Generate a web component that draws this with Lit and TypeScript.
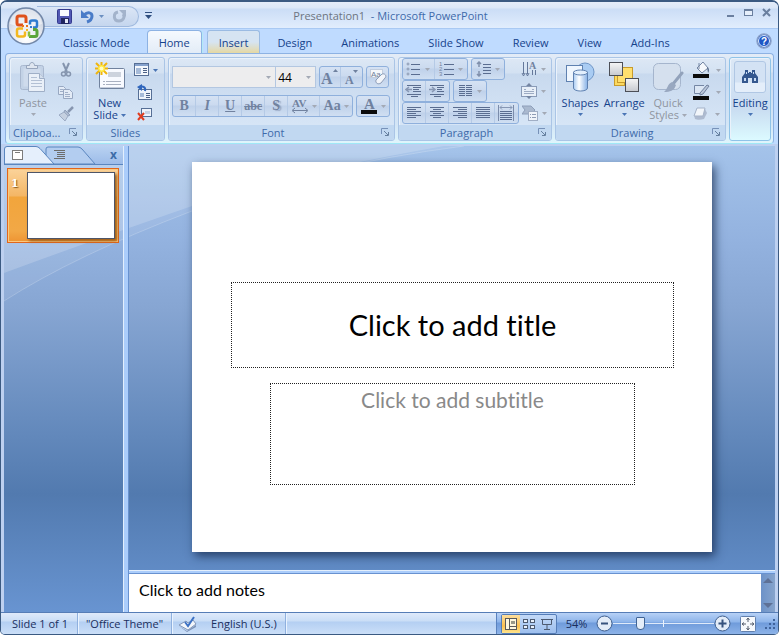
import { LitElement, html, svg, css, TemplateResult } from "lit";
import { customElement } from "lit/decorators.js";
import { classMap } from "lit/directives/class-map.js";

type Art = TemplateResult;

const icon = (w: number, h: number, body: Art) =>
  html`<svg width=${w} height=${h} viewBox="0 0 ${w} ${h}" aria-hidden="true">${body}</svg>`;

const caret = (color = "#a3a9b5") =>
  html`<svg class="caret" width="5" height="3" viewBox="0 0 5 3" aria-hidden="true"><path d="M0 0h5L2.5 3z" fill=${color} /></svg>`;

const lines = (rows: number[][], color = "#5a6d90") =>
  svg`${rows.map(([x, y, w]) => svg`<rect x=${x} y=${y} width=${w} height="1" fill=${color} />`)}`;

const art = {
  paste: icon(28, 32, svg`
    <rect x="1.5" y="4.500" width="23" height="24" rx="2" fill="#c3d2e6" stroke="#a9b8cf"/>
    <rect x="4.500" y="7.500" width="17" height="18" fill="#cfdbec"/>
    <path d="M7.500 7.500v-3h3c0-4 5-4 5 0h3v3z" fill="#dfe6f0" stroke="#97a5bc"/>
    <path d="M9.500 12.500h11l5 5v13h-16z" fill="#eaf0f8" stroke="#9fafc7"/>
    <path d="M20.500 12.500v5h5" fill="#d3deec" stroke="#9fafc7"/>
    ${lines([[12, 16, 6], [12, 19, 11], [12, 22, 11], [12, 25, 11]], "#b3c0d4")}`),
  cut: icon(16, 16, svg`
    <path d="M4 1l4 9M10 1L6 10" stroke="#8595ae" stroke-width="2" fill="none"/>
    <circle cx="4.500" cy="12" r="2" fill="none" stroke="#8595ae" stroke-width="1.500"/>
    <circle cx="9.500" cy="12" r="2" fill="none" stroke="#8595ae" stroke-width="1.500"/>`),
  copy: icon(18, 16, svg`
    <path d="M.5 2.500h5l2 2v6h-7z" fill="#e3ebf6" stroke="#98a8c2"/>
    <path d="M5.500 5.500h6l3 3v6h-9z" fill="#e3ebf6" stroke="#98a8c2"/>
    ${lines([[2, 5, 3], [2, 7, 3], [7, 8, 3], [7, 10, 5], [7, 12, 5]], "#a0afc8")}`),
  painter: icon(18, 16, svg`
    <path d="M15 1l-5 5" stroke="#8796b0" stroke-width="2.500"/>
    <path d="M7 4l5 5-2 1-4-4z" fill="#aebbd0" stroke="#8f9fba"/>
    <path d="M6 6l4 4-3 5L1 9z" fill="#c5d0e0" stroke="#9cabc3"/>`),
  newSlide: icon(32, 32, svg`
    <rect x="5.500" y="7.500" width="25" height="20" rx="1" fill="#f8faff" stroke="#70829e"/>
    <rect x="6" y="26" width="24" height="1" fill="#c4cddc"/>
    <rect x="14" y="11" width="13" height="5" fill="#cdd3dd"/>
    ${lines([[9, 20, 2], [12, 20, 15], [9, 23, 2], [12, 23, 15]], "#a8b0c0")}
    <path d="M7.500 7.500L2 2M7.500 7.500L13 2M7.500 7.500L2 13M7.500 7.500L13 13M7.500 1v13M1 7.500h13" stroke="#efb50f" stroke-width="2"/>
    <circle cx="7.500" cy="7.500" r="3.500" fill="#ffe83e"/><circle cx="7.500" cy="7.500" r="2" fill="#fffcc0"/>`),
  layout: icon(15, 14, svg`
    <rect x=".5" y=".5" width="14" height="12" fill="#f4f8fd" stroke="#566f96"/>
    <rect x="1" y="1" width="13" height="2" fill="#86a2cd"/>
    <rect x="2" y="5" width="5" height="6" fill="#a6bbd9"/>
    ${lines([[9, 5, 4], [9, 7, 4], [9, 9, 4]], "#4c6187")}`),
  reset: icon(16, 17, svg`
    <rect x="1.500" y="5.500" width="13" height="10" fill="#eef4fc" stroke="#566f96"/>
    <rect x="3" y="9" width="4" height="4" fill="#a6bbd9"/>
    ${lines([[9, 9, 4], [9, 11, 4], [9, 13, 4]], "#4c6187")}
    <path d="M8 7c1-4-2-5-5-4" fill="none" stroke="#2f66bd" stroke-width="2"/><path d="M0 3l5-3v7z" fill="#2f66bd"/>`),
  remove: icon(16, 14, svg`
    <rect x="4.500" y="1.500" width="10" height="8" fill="#eef4fc" stroke="#566f96"/>
    <rect x="8" y="4" width="5" height="3" fill="#c5d3e6"/>
    <path d="M1 6l6 7M7 6l-6 7" stroke="#e03c20" stroke-width="2"/>`),
  grow: icon(20, 18, svg`
    <text x="1" y="16" font-family="Liberation Serif" font-weight="bold" font-size="16" fill="#6f819f">A</text>
    <path d="M13 4l2.500-3L18 4z" fill="#6f819f"/>`),
  shrink: icon(18, 18, svg`
    <text x="2" y="16" font-family="Liberation Serif" font-weight="bold" font-size="12" fill="#6f819f">A</text>
    <path d="M10 2l2.500 3L15 2z" fill="#6f819f"/>`),
  clear: icon(18, 18, svg`
    <rect x="1.500" y="1.500" width="12" height="8" fill="#f4f7fb" stroke="#c2cddd"/>
    <text x="2" y="9" font-family="Liberation Sans" font-size="8" fill="#6f7f9a">Aa</text>
    <path d="M7 12l6-6c3-1 5 2 3 4l-4 5c-3 2-6 0-5-3z" fill="#f2f5fa" stroke="#8d9cb6"/>`),
  spacing: icon(18, 16, svg`
    <text x="1" y="9" font-family="Liberation Serif" font-weight="bold" font-size="11" fill="#71829f">AV</text>
    <path d="M2 12.500h14M4 10l-3 2.500L4 15M14 10l3 2.500-3 2.500" stroke="#71829f" fill="none"/>`),
  fontColor: icon(17, 18, svg`
    <text x="3" y="12" font-family="Liberation Serif" font-weight="bold" font-size="15" fill="#6f819f">A</text>
    <rect x="0" y="13" width="16" height="4" fill="#0c0c0c"/>`),
  bullets: icon(16, 14, svg`
    <g fill="none" stroke="#8a98b1"><circle cx="2" cy="2" r="1"/><circle cx="2" cy="7" r="1"/><circle cx="2" cy="12" r="1"/></g>
    ${lines([[5, 2, 9], [5, 7, 9], [5, 12, 9]])}`),
  numbers: icon(16, 14, svg`
    <g font-family="Liberation Sans" font-size="6" fill="#75849f"><text x="0" y="4">1</text><text x="0" y="9">2</text><text x="0" y="14">3</text></g>
    ${lines([[5, 2, 10], [5, 7, 10], [5, 12, 10]])}`),
  lineSpacing: icon(17, 16, svg`
    <path d="M4 6V1M2 3l2-2 2 2M4 10v5M2 13l2 2 2-2" fill="none" stroke="#8090ac" stroke-width="1.500"/>
    ${lines([[8, 3, 8], [8, 6, 8], [8, 9, 8], [8, 12, 8]])}`),
  outdent: icon(18, 16, svg`
    ${lines([[2, 2, 14], [8, 4, 8], [8, 6, 6], [8, 8, 8], [2, 11, 14], [6, 13, 7]])}
    <path d="M7 6.500H1M4 4L1 6.500 4 9" fill="none" stroke="#8797b4" stroke-width="1.500"/>`),
  indent: icon(18, 16, svg`
    ${lines([[2, 2, 14], [9, 4, 7], [9, 6, 5], [9, 8, 7], [2, 11, 14], [6, 13, 7]])}
    <path d="M1 6.500h6M4 4l3 2.500L4 9" fill="none" stroke="#8797b4" stroke-width="1.500"/>`),
  columns: icon(16, 14, svg`${lines([1, 3, 5, 7, 9, 11].flatMap((y) => [[1, y, 6], [8, y, 6]]))}`),
  left: icon(16, 14, svg`${lines([[1, 1, 14], [1, 3, 9], [1, 5, 14], [1, 7, 9], [1, 9, 14], [1, 11, 9]])}`),
  center: icon(16, 14, svg`${lines([[1, 1, 14], [4, 3, 8], [1, 5, 14], [4, 7, 8], [1, 9, 14], [4, 11, 8]])}`),
  right: icon(16, 14, svg`${lines([[1, 1, 14], [6, 3, 9], [1, 5, 14], [6, 7, 9], [1, 9, 14], [6, 11, 9]])}`),
  justify: icon(16, 14, svg`${lines([1, 3, 5, 7, 9, 11].map((y) => [1, y, 14]))}`),
  distribute: icon(18, 16, svg`
    <path d="M1.500 0v16M16.500 0v16" stroke="#7b8cab"/><path d="M3 2.500h12M5 .5l-2 2 2 2M13 .5l2 2-2 2" fill="none" stroke="#8797b4"/>
    ${lines([6, 8, 10, 12, 14].map((y) => [3, y, 12]))}`),
  direction: icon(16, 16, svg`
    <path d="M2.500 1v12M6.500 1v12M11.500 9v5M1 12l1.500 3L4 12M5 12l1.500 3L8 12M14.500 9v5" fill="none" stroke="#65789a"/>
    <text x="8" y="8" font-family="Liberation Serif" font-weight="bold" font-size="10" fill="#71829f">A</text>`),
  alignText: icon(16, 16, svg`
    <rect x=".5" y="3.500" width="15" height="10" fill="#e8eff8" stroke="#8a9bb7"/>
    ${lines([[3, 6, 2], [11, 6, 2], [3, 8, 10], [3, 10, 10]], "#9dabc3")}
    <path d="M8 0l3 3H5zM8 16l3-3H5z" fill="#7485a2"/>`),
  smartArt: icon(16, 16, svg`
    <path d="M0 1h9l4 4-4 4H0l3-4z" fill="#aab9cf" stroke="#8e9fba"/>
    <rect x="6.500" y="6.500" width="9" height="9" fill="#f0f4fa" stroke="#a0aec5"/>
    ${lines([[8, 9, 1], [10, 9, 4], [8, 12, 1], [10, 12, 4]], "#8e9cb5")}`),
  shapes: icon(32, 32, svg`
    <defs><linearGradient id="cyl"><stop offset="0" stop-color="#a9cbf2"/><stop offset=".4" stop-color="#fff"/><stop offset="1" stop-color="#86b1e6"/></linearGradient></defs>
    <circle cx="21" cy="11" r="9" fill="#a9ccf3" stroke="#6f96c7"/>
    <rect x="2.500" y="4.500" width="16" height="16" fill="#eff6fe" stroke="#5f81b0"/>
    <path d="M9.500 11v16c0 4 14 4 14 0V11z" fill="url(#cyl)" stroke="#5f81b0"/>
    <ellipse cx="16.500" cy="11.500" rx="7" ry="2.500" fill="#e2effd" stroke="#5f81b0"/>`),
  arrange: icon(32, 32, svg`
    <defs><linearGradient id="box" x1="0" y1="0" x2="0" y2="1"><stop offset="0" stop-color="#f6f6f6"/><stop offset="1" stop-color="#c6c9cf"/></linearGradient></defs>
    <rect x="6.500" y="14.500" width="10" height="10" fill="#fbd960" stroke="#c89b2c"/>
    <rect x="9.500" y="6.500" width="15" height="15" fill="#ffdf6e" stroke="#c89b2c"/>
    <rect x="1.500" y="1.500" width="13" height="13" fill="url(#box)" stroke="#4c4f57"/>
    <rect x="17.500" y="17.500" width="13" height="13" fill="url(#box)" stroke="#4c4f57"/>`),
  styles: icon(32, 32, svg`
    <rect x="1.500" y="2.500" width="27" height="26" rx="5" fill="#d5e0ee" stroke="#a5b5cd"/>
    <path d="M30 12l-9 11" stroke="#92a2bb" stroke-width="3" stroke-linecap="round"/>
    <path d="M20 21l4 3c-2 6-6 7-12 7 4-3 3-8 8-10z" fill="#99a8c0"/>`),
  fill: icon(17, 18, svg`
    <path d="M4 7l6-6 5 6-6 5z" fill="#f5f8fc" stroke="#7486a4"/><path d="M6 2v6" stroke="#7486a4"/><path d="M14 6c3 1 2 5 1 6z" fill="#5e718f"/>
    <rect x="0" y="13" width="16" height="4" fill="#0c0c0c"/>`),
  outline: icon(17, 18, svg`
    <path d="M11 2.500H1.500v8H10" fill="#dbe6f4" stroke="#7486a4"/><path d="M7 10l7-8 2 1-6 8-3 1z" fill="#b9c6da" stroke="#6f809e"/>
    <rect x="0" y="13" width="16" height="4" fill="#0c0c0c"/>`),
  effects: icon(16, 14, svg`
    <path d="M1 8l3-6c4-1 7-1 8 0l2 4-3 6c-3 1-7 1-9 0z" fill="#aebbd0"/><path d="M4 1h8l-2 8H1z" fill="#f1f5fa" stroke="#a5b3c9"/>`),
  find: icon(18, 16, svg`
    <path d="M4 1h3v3h1V3h2v1h1V1h3v3l3 4v6h-6V9H7v5H1V8l3-4z" fill="#35588f"/>
    <path d="M3 9h2v3H3zM13 9h2v3h-2zM5 3h1v2H5zM12 3h1v2h-1z" fill="#c9dcf4"/>`),
  launch: icon(9, 9, svg`
    <path d="M.5 6V.5H7" fill="none" stroke="#7791b8"/><path d="M3 3l4 4M7.500 4v3.500H4" fill="none" stroke="#66809f"/>`),
  save: icon(15, 15, svg`
    <rect x=".5" y=".5" width="14" height="14" rx="1" fill="#5258b4" stroke="#343a8e"/>
    <rect x="3" y="1" width="9" height="6" fill="#f7f9ff"/><rect x="4" y="9" width="8" height="6" fill="#1f2560"/><rect x="8" y="10" width="3" height="4" fill="#e4e8f8"/>`),
  undo: icon(15, 15, svg`
    <path d="M4 6c4-4 8-2 8 1 0 3-2 5-5 6" fill="none" stroke="#4a7cc8" stroke-width="3"/><path d="M1 1v8h8z" fill="#4a7cc8"/>`),
  redo: icon(15, 15, svg`
    <path d="M6 3C1 4 1 12 7 12c5 0 6-5 4-7" fill="none" stroke="#a3b3cb" stroke-width="3"/><path d="M7 1h7v7z" fill="#a3b3cb"/>`),
  orb: icon(40, 40, svg`
    <defs><radialGradient id="orb" cx=".5" cy=".85" r=".8"><stop offset="0" stop-color="#fff"/><stop offset=".5" stop-color="#e6e9f0"/><stop offset="1" stop-color="#bcc6d8"/></radialGradient></defs>
    <circle cx="20" cy="20" r="18" fill="url(#orb)" stroke="#7287a8" stroke-width="1.500"/>
    <path d="M4 18a16 15 0 0132 0q-16 6-32 0z" fill="#fff" opacity=".5"/>
    <g fill="none" stroke-width="2.500">
      <path d="M17 19h-4q-2 0-2-2v-5q0-2 2-2h5q2 0 2 2v5" stroke="#df521c" stroke-width="3"/>
      <path d="M24 18.500v-2q0-2 2-2h3q2 0 2 2v3q0 2-2 2h-2" stroke="#2f7bd0"/>
      <path d="M17 22.500h-4q-2 0-2 2v4q0 2 2 2h4q2 0 2-2v-3" stroke="#f4b81f"/>
      <path d="M23 30.500h6q2 0 2-2v-3q0-2-2-2h-2" stroke="#5aa53a" stroke-width="3"/>
      <path d="M23 30.500v-5" stroke="#86bf3f"/>
    </g>
    <g fill="#e8741f"><rect x="20" y="19" width="2" height="2"/><rect x="16" y="19" width="2" height="2"/></g>
    <rect x="24" y="20" width="2" height="2" fill="#2f7bd0"/><rect x="20" y="23" width="2" height="2" fill="#f4b81f"/>`),
  help: icon(16, 16, svg`
    <circle cx="8" cy="8" r="7" fill="#1e56c5" stroke="#8aa0c8" stroke-width="1.500"/><circle cx="8" cy="8" r="5.500" fill="none" stroke="#dbe8fb"/>
    <text x="8" y="12" text-anchor="middle" font-family="Liberation Sans" font-weight="bold" font-size="10" fill="#fff">?</text>`),
  proof: icon(20, 18, svg`
    <path d="M1 10l7-4 2 2 5-3 3 4-8 6z" fill="#f3f6fb" stroke="#8397b8"/><path d="M1 11l8 5 9-6v2l-9 5z" fill="#7d93b8"/>
    <path d="M7 7l3 4 6-9" fill="none" stroke="#3e72c4" stroke-width="2"/>`),
  normal: icon(12, 12, svg`
    <rect x=".5" y=".5" width="11" height="11" fill="#fff8de" stroke="#5a5a5a"/><path d="M4.500 0v12M4 8.500h7" stroke="#5a5a5a"/><rect x="6" y="3" width="4" height="3" fill="#9a9a8a"/>`),
  sorter: icon(12, 10, svg`
    <g fill="#e9f1fc" stroke="#4d5a70"><rect x=".5" y=".5" width="4" height="3"/><rect x="7.500" y=".5" width="4" height="3"/><rect x=".5" y="6.500" width="4" height="3"/><rect x="7.500" y="6.500" width="4" height="3"/></g>`),
  show: icon(12, 12, svg`
    <path d="M0 1.500h12M1.500 2v4.500h9V2M6 7v4M3 11.500h6" fill="none" stroke="#4d5a70"/>`),
  fit: icon(16, 16, svg`
    <rect x=".5" y=".5" width="15" height="15" rx="1" fill="#f7f9fc" stroke="#6280ad"/>
    <path d="M8 2v4M8 10v4M2 8h4M10 8h4M6.500 4L8 2l1.500 2M6.500 12L8 14l1.500-2M4 6.500L2 8l2 1.500M12 6.500L14 8l-2 1.500" fill="none" stroke="#58606e"/>`),
  minus: icon(17, 17, svg`
    <circle cx="8.500" cy="8.500" r="7.500" fill="#e3ecf8" stroke="#40608f"/><path d="M5 8.500h7" stroke="#36527d" stroke-width="2"/>`),
  plus: icon(17, 17, svg`
    <circle cx="8.500" cy="8.500" r="7.500" fill="#e3ecf8" stroke="#40608f"/><path d="M4.500 8.500h8M8.500 4.500v8" stroke="#36527d" stroke-width="2"/>`),
};

const btn = (label: string, content: unknown, cls = "cell") =>
  html`<button class=${cls} aria-label=${label}>${content}</button>`;

const drop = (label: string, content: unknown, cls = "cell") =>
  btn(label, html`${content}${caret()}`, cls);

@customElement("app-ribbon")
class AppRibbon extends LitElement {
  static styles = css`
    :host { display: block; padding: 0 4px; background: #bfdbff; }
    svg { display: block; flex: none; }
    button { border: 0; padding: 0; margin: 0; background: none; font: inherit; color: inherit; display: flex; align-items: center; justify-content: center; }
    .panel {
      display: grid; grid-template-columns: 74fr 80fr 228fr 155fr 172fr 42fr; column-gap: 3px;
      padding: 3px 2px 2px 3px; border: 1px solid #8db2e3; border-bottom-color: #9fe8f6; border-radius: 4px;
      background: linear-gradient(#e3ecf7 0, #d5e3f3 18px, #c9daf0 19px, #d3e5f6 70px, #dff5fc 100%);
      font: 11px/12px "Open Sans", "Noto Sans", sans-serif; color: #15428b;
    }
    .group {
      display: flex; flex-direction: column; min-width: 0; overflow: hidden;
      border: 1px solid #aac5e6; border-radius: 3px; box-shadow: inset 1px 1px 0 #eaf2fb;
      background: linear-gradient(#dde8f5 0, #d3e1f2 15px, #c8d9ee 16px, #d6e5f6 66px);
    }
    .content { height: 67px; display: flex; flex: none; }
    .caption {
      height: 15px; display: flex; align-items: center;
      background: #c1d8f1; color: #3e6aaa; line-height: 15px; white-space: nowrap;
    }
    .caption span { flex: 1; text-align: center; }
    .caption.first span { text-align: left; padding-left: 3px; }
    .launcher { width: 17px; height: 15px; }
    .big { flex-direction: column; justify-content: flex-start; width: 44px; padding-top: 3px; flex: none; }
    .big > svg:first-child { height: 32px; margin-bottom: 4px; }
    .big > .caret { margin-top: 4px; }
    .big .inline { display: flex; align-items: center; gap: 3px; }
    .dim { color: #8f959f; }
    .stack { display: flex; flex-direction: column; padding-top: 1px; }
    .stack .cell { height: 22px; gap: 4px; min-width: 22px; }
    .clip .big { width: 46px; }
    .slides { padding-left: 1px; }
    .slides .stack { padding-left: 2px; align-items: flex-start; }
    .font { flex-direction: column; gap: 7px; padding: 8px 3px 0 3px; box-sizing: border-box; }
    .row { display: flex; gap: 3px; height: 22px; }
    .set { display: flex; border: 1px solid #8fb0dc; border-radius: 3px; background: linear-gradient(#d5e2f3 0, #cbdaef 9px, #bfd1ea 10px, #d0dff2 100%); box-sizing: border-box; height: 22px; }
    .set .cell { min-width: 23px; gap: 3px; color: #71829f; border-right: 1px solid #b5cae6; }
    .set .cell:last-child { border-right: 0; }
    .font .tight { min-width: 21px; }
    .combo { display: flex; position: relative; }
    .combo select {
      appearance: none; width: 104px; height: 22px; box-sizing: border-box; border: 1px solid #b3c7e1; border-radius: 0; background: #ededee;
      font: 12px "Open Sans", "Noto Sans", sans-serif; color: #000; padding: 0 2px; margin: 0;
    }
    .combo.size select { width: 40px; border-left: 0; }
    .combo .caret { position: absolute; right: 5px; top: 10px; }
    .combos { display: flex; }
    .serif { font: bold 14px "Liberation Serif", serif; }
    .italic { font-style: italic; }
    .under { text-decoration: underline; }
    .strike { font-size: 12px; text-decoration: line-through; }
    .shade { text-shadow: 2px 1px 1px #9aa9c4; }
    .set .wide { min-width: 32px; }
    .para { flex-direction: column; padding: 0 3px; }
    .free { margin-left: auto; width: 27px; gap: 4px; justify-content: flex-start; }
    .draw { padding-left: 2px; }
    .draw .stack { padding-left: 3px; }
    .draw .stack .cell { justify-content: flex-start; gap: 6px; }
    .edit { flex: 1; justify-content: center; }
    .editing { background: linear-gradient(#dce8f6, #c9dcf1 50px, #dcfaff); border-color: #8fc3e8; }
    .frame { width: 30px; height: 30px; border: 1px solid #b0c7e4; border-radius: 3px; display: flex; justify-content: center; align-items: center; background: linear-gradient(#d3e2f4 20px, #e4eefa 21px); margin-bottom: 4px; }
  `;

  private group(name: string, body: unknown, launcher = true, cls = "") {
    return html`<section class="group" aria-label=${name}>
      ${body}
      <div class="caption ${cls}">
        <span>${name}</span>
        ${launcher ? btn(`${name} options`, art.launch, "launcher") : ""}
      </div>
    </section>`;
  }

  render() {
    const blue = "#4a75b5";
    return html`<div class="panel">
      ${this.group("Clipboa...", html`<div class="content clip">
        <button class="big dim">${art.paste}<span>Paste</span>${caret()}</button>
        <div class="stack">${btn("Cut", art.cut)}${btn("Copy", art.copy)}${btn("Format Painter", art.painter)}</div>
      </div>`, true, "first")}
      ${this.group("Slides", html`<div class="content slides">
        <button class="big">${art.newSlide}<span>New</span><span class="inline">Slide ${caret(blue)}</span></button>
        <div class="stack">
          ${btn("Layout", html`${art.layout}${caret(blue)}`)}${btn("Reset", art.reset)}${btn("Delete", art.remove)}
        </div>
      </div>`, false)}
      ${this.group("Font", html`<div class="content font">
        <div class="row">
          <div class="combos">
            <label class="combo"><select aria-label="Font name"><option></option></select>${caret()}</label>
            <label class="combo size"><select aria-label="Font size"><option>44</option></select>${caret()}</label>
          </div>
          <div class="set">${btn("Grow Font", art.grow, "cell tight")}${btn("Shrink Font", art.shrink, "cell tight")}</div>
          <div class="set">${btn("Clear Formatting", art.clear, "cell tight")}</div>
        </div>
        <div class="row">
          <div class="set serif">
            ${btn("Bold", "B")}
            ${btn("Italic", html`<span class="italic">I</span>`)}
            ${btn("Underline", html`<span class="under">U</span>`)}
            ${btn("Strikethrough", html`<span class="strike">abc</span>`)}
            ${btn("Shadow", html`<span class="shade">S</span>`)}
            ${drop("Character Spacing", art.spacing, "cell wide")}
            ${drop("Change Case", "Aa", "cell wide")}
          </div>
          <div class="set">${drop("Font Color", art.fontColor, "cell wide")}</div>
        </div>
      </div>`)}
      ${this.group("Paragraph", html`<div class="content para">
        <div class="row">
          <div class="set">${drop("Bullets", art.bullets, "cell wide")}${drop("Numbering", art.numbers, "cell wide")}</div>
          <div class="set">${drop("Line Spacing", art.lineSpacing, "cell wide")}</div>
          ${drop("Text Direction", art.direction, "free")}
        </div>
        <div class="row">
          <div class="set">${btn("Decrease Indent", art.outdent)}${btn("Increase Indent", art.indent)}</div>
          <div class="set">${drop("Columns", art.columns, "cell wide")}</div>
          ${drop("Align Text", art.alignText, "free")}
        </div>
        <div class="row">
          <div class="set">
            ${btn("Align Left", art.left)}${btn("Center", art.center)}${btn("Align Right", art.right)}${btn("Justify", art.justify)}${btn("Distribute", art.distribute)}
          </div>
          ${drop("Convert to SmartArt", art.smartArt, "free")}
        </div>
      </div>`)}
      ${this.group("Drawing", html`<div class="content draw">
        <button class="big">${art.shapes}<span>Shapes</span>${caret(blue)}</button>
        <button class="big">${art.arrange}<span>Arrange</span>${caret(blue)}</button>
        <button class="big dim">${art.styles}<span>Quick</span><span class="inline">Styles ${caret()}</span></button>
        <div class="stack">${drop("Shape Fill", art.fill)}${drop("Shape Outline", art.outline)}${drop("Shape Effects", art.effects)}</div>
      </div>`)}
      <section class="group editing" aria-label="Editing">
        <div class="content edit">
          <button class="big"><span class="frame">${art.find}</span><span>Editing</span>${caret(blue)}</button>
        </div>
      </section>
    </div>`;
  }
}

@customElement("app-root")
class AppRoot extends LitElement {
  static styles = css`
    :host {
      display: flex; flex-direction: column; height: 100vh; min-height: 480px; box-sizing: border-box; position: relative; overflow: hidden;
      font: 11px/14px "Open Sans", "Noto Sans", sans-serif; color: #15428b;
      border: 1px solid #3b5a82; border-top-width: 2px; border-radius: 7px 7px 5px 5px; background: #bfdbff;
    }
    svg { display: block; flex: none; }
    button { border: 0; padding: 0; margin: 0; background: none; font: inherit; color: inherit; display: flex; align-items: center; justify-content: center; }

    .titlebar {
      display: grid; grid-template-columns: 1fr auto 1fr; align-items: center; height: 27px; flex: none; padding-top: 2px;
      background: linear-gradient(#e4ecf9 0, #dbe7f8 6px, #cbddf6 7px, #e1edfd 100%); border-bottom: 1px solid #a9c9f3; box-sizing: border-box;
    }
    .quick { display: flex; align-items: center; height: 21px; margin-left: 36px; gap: 6px; }
    .pill {
      display: flex; align-items: center; gap: 8px; height: 21px; box-sizing: border-box; padding: 0 11px 0 20px;
      border: 1px solid #9fb9de; border-left: 0; border-radius: 0 11px 11px 0; background: linear-gradient(#dbe6f6, #c5d6ee);
    }
    .undo { gap: 4px; }
    .title { color: #3e6aaa; white-space: pre; padding-left: 2px; }
    .title .doc { color: #6d7480; }
    .window { display: flex; justify-content: flex-end; gap: 6px; padding-right: 5px; align-self: start; }
    .window button { width: 12px; height: 18px; }

    .orb { position: absolute; left: 5px; top: 4px; width: 40px; height: 40px; z-index: 2; }

    .tabs { display: flex; align-items: flex-end; height: 24px; flex: none; padding-left: 50px; position: relative; }
    .tab { height: 23px; padding: 2px 11px 0; border: 1px solid transparent; border-bottom: 0; box-sizing: border-box; white-space: nowrap; margin-right: 5px; }
    .tab.active { background: linear-gradient(#f5f9fe, #e3ecf7); border-color: #8db2e3; border-radius: 4px 4px 0 0; box-shadow: 1px 0 0 #b3eaf5; }
    .tab.hot { background: linear-gradient(#d6e4f2 50%, #e5d8a4); border-color: #9bbbe2; border-radius: 3px 3px 0 0; }
    .help { margin-left: auto; align-self: center; padding-right: 6px; }

    .work { flex: 1; min-height: 0; position: relative; display: flex; padding: 2px 3px 0 3px; background: #bdd0f0; }
    .stage { flex: 1; position: relative; display: grid; grid-template-columns: 119px 6px minmax(0, 1fr); overflow: hidden;
      background: linear-gradient(#a4c3ea 0, #93b2df 95px, #86a5d2 165px, #6288bb 290px, #527aaf 348px, #6894d1 466px); }
    .swoosh { position: absolute; left: 0; top: 0; }
    .outline { position: relative; display: flex; flex-direction: column; }
    .panes { height: 18px; flex: none; display: flex; position: relative; background: linear-gradient(#b9d2f2, #9dbce9); border-bottom: 1px solid #5a86bf; }
    .panes .shapes { position: absolute; left: 0; top: 0; }
    .panes button { position: relative; height: 17px; width: 42px; justify-content: flex-start; padding-left: 8px; }
    .panes .close { margin-left: auto; width: 19px; padding: 0; justify-content: center; font-weight: bold; font-size: 12px; color: #3c6ba8; }
    .thumb {
      display: flex; margin: 3px 4px 0 3px; height: 75px; box-sizing: border-box; border: 1px solid #e2661b; padding: 3px; align-items: flex-start;
      background: linear-gradient(#fbd39a, #f4b665 27px, #f2a53c 28px, #f2a846 62px, #ee9433); box-shadow: inset 0 0 0 1px #fac97f;
    }
    .num { width: 16px; padding-top: 5px; color: #fff; font: bold 11px/14px "DejaVu Serif", serif; text-shadow: 1px 1px 1px #8a5a1e; text-align: left; }
    .sheet { flex: 1; height: 67px; box-sizing: border-box; background: #fff; border: 1px solid #4e5568; box-shadow: 2px 2px 3px #9a5c17; }
    .split { position: relative; background: #abcdfb; border-left: 1px solid #e3effd; border-right: 1px solid #6892d0; }
    .main { position: relative; display: flex; flex-direction: column; min-width: 0; }
    .canvas { flex: 1; display: grid; padding: 16px 63px 18px; min-height: 0; }
    .slide {
      background: #fff; box-shadow: 3px 4px 9px rgba(20, 40, 75, .75); display: grid; min-height: 0;
      grid-template-rows: 120fr 86fr 15fr 102fr 67fr; grid-template-columns: 39fr 39fr 365fr 39fr 38fr;
    }
    .ph { display: flex; justify-content: center; border: 1px dotted #222; font-family: "Lato", "Open Sans", sans-serif; font-variant-ligatures: none; box-sizing: border-box; white-space: nowrap; }
    .heading { grid-row: 2; grid-column: 2 / 5; align-items: center; font-size: 29px; line-height: 34px; color: #000; margin: 0; font-weight: 400; }
    .sub { grid-row: 4; grid-column: 3; align-items: flex-start; padding-top: 2px; font-size: 21px; line-height: 28px; color: #898989; margin: 0; }
    .notesbar { height: 4px; flex: none; background: #abcdfb; border-top: 1px solid #e3effd; border-bottom: 1px solid #6892d0; box-sizing: border-box; }
    .notes { display: flex; height: 38px; flex: none; background: #fff; }
    .notes textarea { flex: 1; min-width: 0; border: 0; outline: 0; resize: none; overflow: hidden; padding: 6px 10px; font: 16px/20px "Lato", "Open Sans", sans-serif; color: #000; background: #fff; }
    .notes textarea::placeholder { color: #000; opacity: 1; }
    .scroll { width: 14px; display: flex; flex-direction: column; justify-content: space-between; align-items: center; padding: 4px 0; background: linear-gradient(90deg, #6d92c8, #86a4cc); }

    .status { display: flex; height: 22px; flex: none; align-items: stretch; border-top: 1px solid #567db6; box-sizing: border-box;
      background: linear-gradient(#dfeafa 0, #cadef6 8px, #b4cff2 9px, #cbdff8 100%); color: #1a2f5e; white-space: nowrap; }
    .item { display: flex; align-items: center; padding: 0 9px; border-right: 1px solid #8fb0de; box-shadow: 1px 0 0 #e9f3ff; }
    .item:first-child { padding-left: 11px; }
    .item:nth-child(2) { padding: 0 8px; }
    .item.lang { gap: 13px; padding-left: 6px; padding-right: 8px; }
    .tools { margin-left: auto; display: flex; align-items: center; padding-left: 4px; border-left: 1px solid #5a82be;
      background: linear-gradient(#b7d1f6 0, #8db4ea 9px, #6f9bdb 10px, #8db3e8 100%); }
    .views { display: flex; border: 1px solid #557db8; border-radius: 2px; background: linear-gradient(#c3d9f7, #9dbfee); }
    .views button { width: 18px; height: 18px; }
    .views .on { background: linear-gradient(#fddf9e, #fcc04f 60%, #fde48e); }
    .pct { width: 39px; text-align: center; }
    .range { appearance: none; width: 101px; height: 17px; margin: 0; background:
      linear-gradient(#e9f2fd, #e9f2fd) 50% 50% / 1px 7px no-repeat,
      linear-gradient(#dfeafa, #dfeafa) 0 50% / 100% 1px no-repeat; }
    .range::-webkit-slider-thumb { appearance: none; width: 9px; height: 13px; border: 1px solid #3f6395; border-radius: 1px 1px 4px 4px; background: #e4edf9; }
    .fit { margin: 0 8px 0 9px; }
  `;

  private tabNames = ["Classic Mode", "Home", "Insert", "Design", "Animations", "Slide Show", "Review", "View", "Add-Ins"];

  render() {
    return html`
      <header class="titlebar">
        <div class="quick">
          <div class="pill">
            ${btn("Save", art.save, "")}
            ${btn("Undo", html`${art.undo}${caret("#6b8fc0")}`, "undo")}
            ${btn("Redo", art.redo, "")}
          </div>
          ${btn("Customize", icon(7, 8, svg`<path d="M0 .5h7" stroke="#2f4f80"/><path d="M0 3h7L3.500 7z" fill="#2f4f80"/>`), "")}
        </div>
        <div class="title"><span class="doc">Presentation1</span>  - Microsoft PowerPoint</div>
        <div class="window">
          ${btn("Minimize", icon(8, 12, svg`<rect x="0" y="8" width="7" height="2" fill="#6a7f9f"/>`), "")}
          ${btn("Restore", icon(10, 10, svg`<rect x=".5" y="1.500" width="8" height="6" fill="#e6effb" stroke="#6a7f9f"/><rect y="1" width="9" height="2" fill="#6a7f9f"/>`), "")}
          ${btn("Close", icon(10, 10, svg`<path d="M1 1l7 7M8 1L1 8" stroke="#6a7f9f" stroke-width="2"/>`), "")}
        </div>
      </header>
      ${btn("Office menu", art.orb, "orb")}
      <nav class="tabs">
        ${this.tabNames.map((t) => html`<button class=${classMap({ tab: true, active: t === "Home", hot: t === "Insert" })}>${t}</button>`)}
        ${btn("Help", art.help, "help")}
      </nav>
      <app-ribbon></app-ribbon>
      <div class="work">
        <div class="stage">
          <svg class="swoosh" width="772" height="466" viewBox="0 0 772 466" aria-hidden="true">
            <path d="M0 127Q95 92 188 60T440 0H0z" fill="#fff" opacity=".18" />
            <path d="M0 155Q70 110 188 65T460 0H0z" fill="#fff" opacity=".08" />
            <path d="M0 155Q70 110 188 65T460 0" fill="none" stroke="#fff" opacity=".2" />
          </svg>
          <aside class="outline">
            <div class="panes">
              <svg class="shapes" width="119" height="18" viewBox="0 0 119 18" aria-hidden="true">
                <path d="M42 17V3q0-2 2-2h30q2 0 4 2l13 15H50z" fill="#b3cdf0" stroke="#5a86bf" />
                <path d="M.5 18V3q0-2.500 2.500-2.500h29q2 0 4 2L50 18z" fill="#e5effc" stroke="#5a86bf" />
              </svg>
              ${btn("Slides", icon(12, 12, svg`<rect x=".5" y="1.500" width="10" height="9" fill="#fff" stroke="#7c7c7c"/><rect x="3" y="3" width="5" height="1" fill="#7c7c7c"/>`), "")}
              ${btn("Outline", icon(12, 10, lines([[0, 0, 11], [3, 2, 8], [3, 4, 8], [3, 6, 8], [0, 8, 11]], "#6c6c6c")), "")}
              <button class="close" aria-label="Close pane">x</button>
            </div>
            <button class="thumb" aria-label="Slide 1"><span class="num">1</span><span class="sheet"></span></button>
          </aside>
          <div class="split"></div>
          <main class="main">
            <div class="canvas">
              <article class="slide">
                <h1 class="ph heading">Click to add title</h1>
                <p class="ph sub">Click to add subtitle</p>
              </article>
            </div>
            <div class="notesbar"></div>
            <div class="notes">
              <textarea aria-label="Notes" placeholder="Click to add notes"></textarea>
              <div class="scroll">
                ${btn("Scroll up", icon(10, 5, svg`<path d="M0 5l5-5 5 5z" fill="#5e7196"/>`), "")}
                ${btn("Scroll down", icon(10, 5, svg`<path d="M0 0l5 5 5-5z" fill="#5e7196"/>`), "")}
              </div>
            </div>
          </main>
        </div>
      </div>
      <footer class="status">
        <span class="item">Slide 1 of 1</span>
        <span class="item">"Office Theme"</span>
        <span class="item lang">${art.proof}<span>English (U.S.)</span></span>
        <div class="tools">
          <div class="views">${btn("Normal", art.normal, "on")}${btn("Slide Sorter", art.sorter, "")}${btn("Slide Show", art.show, "")}</div>
          <span class="pct">54%</span>
          ${btn("Zoom out", art.minus, "")}
          <input class="range" type="range" min="0" max="100" value="25" aria-label="Zoom" />
          ${btn("Zoom in", art.plus, "")}
          ${btn("Fit slide to window", art.fit, "fit")}
          ${icon(14, 14, svg`<g fill="#3f639c"><rect x="9" y="2" width="2" height="2"/><rect x="5" y="6" width="2" height="2"/><rect x="9" y="6" width="2" height="2"/><rect x="1" y="10" width="2" height="2"/><rect x="5" y="10" width="2" height="2"/><rect x="9" y="10" width="2" height="2"/></g>`)}
        </div>
      </footer>
    `;
  }
}
